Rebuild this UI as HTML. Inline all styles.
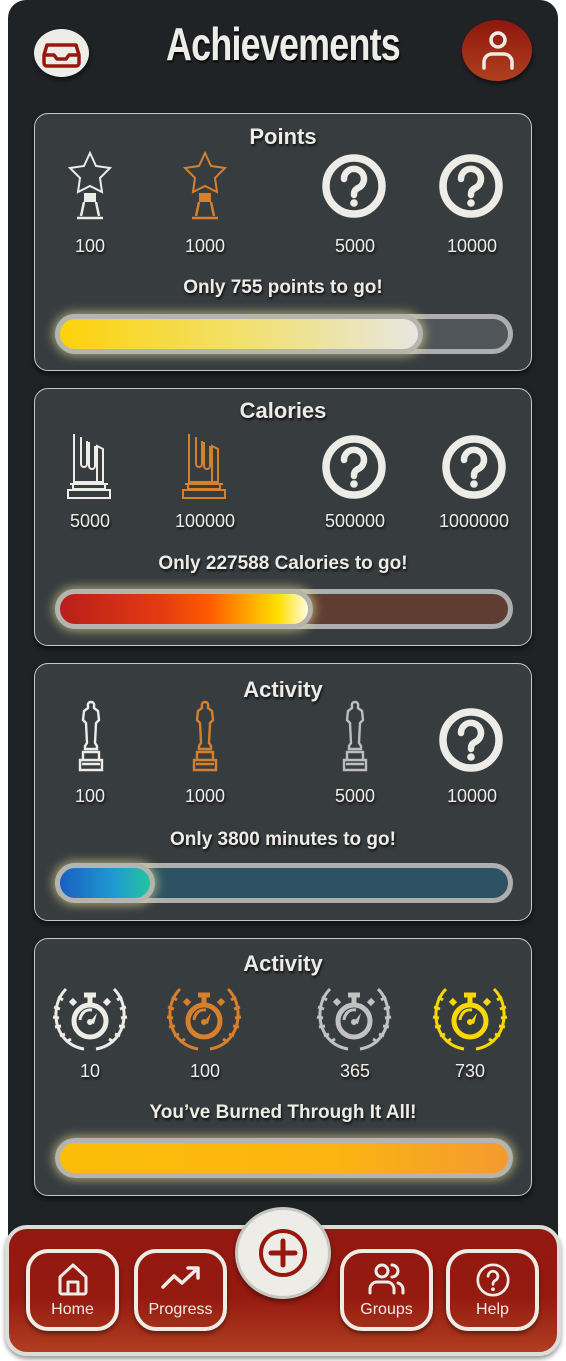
<!DOCTYPE html>
<html><head><meta charset="utf-8"><style>
*{margin:0;padding:0;box-sizing:border-box}
body{width:566px;height:1361px;background:#fff;position:relative;overflow:hidden;font-family:"Liberation Sans",sans-serif;color:#eeece6}
.panel{position:absolute;left:8px;top:0;width:550px;height:1260px;background:#1f2326;border-radius:18px}
.title{position:absolute;left:0;width:566px;top:18px;text-align:center;font-family:"Liberation Sans Narrow","Liberation Sans",sans-serif;font-weight:bold;font-size:46px;line-height:52px;letter-spacing:-1px;transform:scaleX(.78);text-shadow:1px 2px 2px #000}
.card{position:absolute;left:34px;width:498px;height:258px;background:#373c3f;border:1px solid #c9c9c4;border-radius:14px;box-shadow:0 3px 6px rgba(0,0,0,.6)}
.ct{position:absolute;left:0;width:100%;text-align:center;font-weight:bold;font-size:22px;text-shadow:1px 2px 2px #111}
.lab{position:absolute;width:100px;text-align:center;font-size:18px;text-shadow:1px 2px 2px #111}
.sub{position:absolute;left:0;width:100%;text-align:center;font-weight:bold;font-size:19px;text-shadow:1px 2px 2px #111}
.track{position:absolute;left:20px;width:458px;height:40px;border:5px solid #aeaeae;border-radius:20px}
.fill{position:absolute;left:20px;height:40px;border:5px solid #b5b5b0;border-radius:20px}
svg.ic{position:absolute}
.nav{position:absolute;left:5px;top:1225px;width:556px;height:131px;border:4px solid #dcdcd8;border-radius:22px;background:linear-gradient(#921810,#951a10 55%,#b03e20);box-shadow:0 3px 5px rgba(0,0,0,.4)}
.nb{position:absolute;top:1249px;width:93px;height:82px;border:4px solid #eeece6;border-radius:22px;box-shadow:0 3px 4px rgba(0,0,0,.4)}
.nb span{position:absolute;left:0;width:100%;bottom:8px;text-align:center;font-size:16px;color:#eeece6}
.nb svg{position:absolute;left:50%;top:8px;transform:translateX(-50%)}
</style></head><body>
<svg width="0" height="0" style="position:absolute">
<defs>
<symbol id="q" viewBox="0 0 70 70"><circle cx="35" cy="35" r="28" fill="none" stroke="currentColor" stroke-width="7.5"/><path d="M25 28a10 10 0 1 1 14 9c-3 2-4 3-4 7" fill="none" stroke="currentColor" stroke-width="6.5" stroke-linecap="round"/><circle cx="35" cy="52" r="3.8" fill="currentColor"/></symbol>
<symbol id="star" viewBox="0 0 50 70"><path d="M25 2l6 13 14 2-10 10 2 14-12-6-12 6 2-14L5 17l14-2z" fill="none" stroke="currentColor" stroke-width="2"/><path d="M19 42h12v9H19z" fill="currentColor"/><path d="M19 51l-3 14M31 51l3 14M12 67h26" stroke="currentColor" stroke-width="2.5" fill="none"/></symbol>
<symbol id="pil" viewBox="0 0 50 70"><path d="M10 2v48h29V17l-6-3v36M17 5v27a3 3 0 0 0 6 0V9M25 10v24a3 3 0 0 0 6 0V14M6 52h38M9 52v5h32v-5M4 58h42v8H4z" fill="none" stroke="currentColor" stroke-width="2"/></symbol>
<symbol id="osc" viewBox="0 0 30 76"><path d="M15 2a3 3 0 0 1 3 4v2l4 3 1 9-3 3-1 20 2 3v3h-12v-3l2-3-1-20-3-3 1-9 4-3V6a3 3 0 0 1 3-4zM7 52h16v8H7zM4 60h22v10H4zM6 64h18" fill="none" stroke="currentColor" stroke-width="2.4"/></symbol>
<symbol id="sw" viewBox="0 0 84 70"><g fill="none" stroke="currentColor" stroke-width="3"><circle cx="42" cy="38" r="16" stroke-width="5"/><path d="M34 31a10 10 0 0 1 10-4M32 37a12 12 0 0 1 4-8" stroke-width="3"/><path d="M36 12h12M42 12v8" stroke-width="5"/><path d="M27 17l-4 4M57 17l4 4" stroke-width="6"/><path d="M18 6C6 18 4 40 16 55c6 7 14 10 20 11M66 6c12 12 14 34 2 49-6 7-14 10-20 11" stroke-width="3"/><path d="M10 14l5 3M6 24l6 2M5 34l6 1M7 44l6-1M12 53l5-2M18 59l5-3M74 14l-5 3M78 24l-6 2M79 34l-6 1M77 44l-6-1M72 53l-5-2M66 59l-5-3" stroke-width="3"/></g><path d="M42 39l7-9-3 11z" fill="currentColor"/><circle cx="42" cy="39" r="3" fill="currentColor"/></symbol>
</defs></svg>

<div class="panel"></div>
<div style="position:absolute;left:34px;top:29px;width:55px;height:48px;border-radius:50%;background:#eeece6;box-shadow:1px 3px 4px rgba(0,0,0,.5)"></div>
<svg class="ic" style="left:40px;top:33px" width="43" height="40" viewBox="0 0 43 40"><path d="M7 12h29l3 10v8a3 3 0 0 1-3 3H7a3 3 0 0 1-3-3v-8zM4 22h10l3 4h9l3-4h10" fill="none" stroke="#98180f" stroke-width="3.5" stroke-linejoin="round"/></svg>
<div class="title">Achievements</div>
<div style="position:absolute;left:462px;top:20px;width:70px;height:61px;border-radius:50%;background:linear-gradient(#8e160d,#b0401e);box-shadow:1px 3px 4px rgba(0,0,0,.5)"></div>
<svg class="ic" style="left:478px;top:28px" width="40" height="44" viewBox="0 0 40 44"><circle cx="20" cy="12" r="7" fill="none" stroke="#eeece6" stroke-width="3.5"/><path d="M6 40v-6a8 8 0 0 1 8-8h12a8 8 0 0 1 8 8v6" fill="none" stroke="#eeece6" stroke-width="3.5" stroke-linecap="round"/></svg>

<div class="card" style="top:113px">
<div class="ct" style="top:10px">Points</div>
<div class="lab" style="left:5px;top:122px">100</div>
<div class="lab" style="left:120px;top:122px">1000</div>
<div class="lab" style="left:270px;top:122px">5000</div>
<div class="lab" style="left:387px;top:122px">10000</div>
<div class="sub" style="top:163px">Only 755 points to go!</div>
<div class="track" style="top:200px;background:#505559"></div>
<div class="fill" style="top:200px;width:368px;background:linear-gradient(90deg,#fdd20a,#f2e06a 50%,#e8e6e0);box-shadow:0 0 10px 2px rgba(240,230,150,.6)"></div>
</div>
<svg class="ic" style="left:65px;top:151px;color:#eeece6" width="50" height="70"><use href="#star"/></svg>
<svg class="ic" style="left:180px;top:151px;color:#d6802e" width="50" height="70"><use href="#star"/></svg>
<svg class="ic" style="left:319px;top:151px;color:#eeece6" width="70" height="70"><use href="#q"/></svg>
<svg class="ic" style="left:436px;top:151px;color:#eeece6" width="70" height="70"><use href="#q"/></svg>

<div class="card" style="top:388px">
<div class="ct" style="top:9px">Calories</div>
<div class="lab" style="left:5px;top:122px">5000</div>
<div class="lab" style="left:120px;top:122px">100000</div>
<div class="lab" style="left:270px;top:122px">500000</div>
<div class="lab" style="left:389px;top:122px">1000000</div>
<div class="sub" style="top:164px">Only 227588 Calories to go!</div>
<div class="track" style="top:200px;background:#5f3d32"></div>
<div class="fill" style="top:200px;width:258px;background:linear-gradient(90deg,#b81f1a,#e33a12 40%,#ff5a00 60%,#ffe000 88%,#fffbe0);box-shadow:0 0 10px 2px rgba(240,230,150,.6)"></div>
</div>
<svg class="ic" style="left:64px;top:432px;color:#eeece6" width="50" height="70"><use href="#pil"/></svg>
<svg class="ic" style="left:179px;top:432px;color:#d6802e" width="50" height="70"><use href="#pil"/></svg>
<svg class="ic" style="left:319px;top:432px;color:#eeece6" width="70" height="70"><use href="#q"/></svg>
<svg class="ic" style="left:439px;top:432px;color:#eeece6" width="70" height="70"><use href="#q"/></svg>

<div class="card" style="top:663px">
<div class="ct" style="top:13px">Activity</div>
<div class="lab" style="left:5px;top:122px">100</div>
<div class="lab" style="left:120px;top:122px">1000</div>
<div class="lab" style="left:270px;top:122px">5000</div>
<div class="lab" style="left:387px;top:122px">10000</div>
<div class="sub" style="top:165px">Only 3800 minutes to go!</div>
<div class="track" style="top:199px;background:#2d5263"></div>
<div class="fill" style="top:199px;width:100px;background:linear-gradient(90deg,#1a5fc0,#1f9ad0 60%,#25c4a0);box-shadow:0 0 10px 2px rgba(240,230,150,.6)"></div>
</div>
<svg class="ic" style="left:76px;top:700px;color:#eeece6" width="30" height="76"><use href="#osc"/></svg>
<svg class="ic" style="left:190px;top:700px;color:#d6802e" width="30" height="76"><use href="#osc"/></svg>
<svg class="ic" style="left:340px;top:700px;color:#bdbdbd" width="30" height="76"><use href="#osc"/></svg>
<svg class="ic" style="left:436px;top:705px;color:#eeece6" width="70" height="70"><use href="#q"/></svg>

<div class="card" style="top:938px">
<div class="ct" style="top:12px">Activity</div>
<div class="lab" style="left:5px;top:122px">10</div>
<div class="lab" style="left:120px;top:122px">100</div>
<div class="lab" style="left:270px;top:122px">365</div>
<div class="lab" style="left:385px;top:122px">730</div>
<div class="sub" style="top:163px">You’ve Burned Through It All!</div>
<div class="fill" style="top:199px;width:458px;background:linear-gradient(90deg,#fbbd08,#fcb510 60%,#f39a30);box-shadow:0 0 10px 2px rgba(240,230,150,.6)"></div>
</div>
<svg class="ic" style="left:48px;top:983px;color:#eeece6" width="84" height="70"><use href="#sw"/></svg>
<svg class="ic" style="left:162px;top:983px;color:#d6802e" width="84" height="70"><use href="#sw"/></svg>
<svg class="ic" style="left:312px;top:983px;color:#c2c2c2" width="84" height="70"><use href="#sw"/></svg>
<svg class="ic" style="left:428px;top:983px;color:#f8d800" width="84" height="70"><use href="#sw"/></svg>

<div class="nav"></div>
<div class="nb" style="left:26px"><svg width="36" height="36" viewBox="0 0 36 36"><path d="M5 16L18 4l13 12v15a2 2 0 0 1-2 2H7a2 2 0 0 1-2-2zM13 33V21h10v12" fill="none" stroke="#eeece6" stroke-width="3" stroke-linejoin="round"/></svg><span>Home</span></div>
<div class="nb" style="left:134px"><svg width="44" height="36" viewBox="0 0 44 36"><path d="M4 26l11-11 8 7 15-14M29 7h10v10" fill="none" stroke="#eeece6" stroke-width="3.5" stroke-linecap="round" stroke-linejoin="round"/></svg><span>Progress</span></div>
<div class="nb" style="left:340px"><svg width="44" height="36" viewBox="0 0 44 36"><circle cx="17" cy="10" r="6" fill="none" stroke="#eeece6" stroke-width="3"/><path d="M5 32v-4a7 7 0 0 1 7-7h10a7 7 0 0 1 7 7v4M27 4a6 6 0 0 1 0 12M33 22a7 7 0 0 1 5 6v4" fill="none" stroke="#eeece6" stroke-width="3" stroke-linecap="round"/></svg><span>Groups</span></div>
<div class="nb" style="left:446px"><svg width="40" height="38" viewBox="0 0 70 70"><circle cx="35" cy="35" r="28" fill="none" stroke="#eeece6" stroke-width="5"/><path d="M26 28a9 9 0 1 1 13 8c-3 2-4 3-4 7" fill="none" stroke="#eeece6" stroke-width="5" stroke-linecap="round"/><circle cx="35" cy="52" r="3.5" fill="#eeece6"/></svg><span>Help</span></div>
<div style="position:absolute;left:235px;top:1207px;width:96px;height:92px;border-radius:50%;background:#eeece6;border:3px solid #c7c7c2;box-shadow:0 3px 5px rgba(0,0,0,.4)"></div>
<svg class="ic" style="left:257px;top:1227px" width="52" height="52" viewBox="0 0 52 52"><circle cx="26" cy="26" r="22" fill="none" stroke="#98180f" stroke-width="4"/><path d="M26 14v24M14 26h24" stroke="#98180f" stroke-width="5" stroke-linecap="round"/></svg>
</body></html>
